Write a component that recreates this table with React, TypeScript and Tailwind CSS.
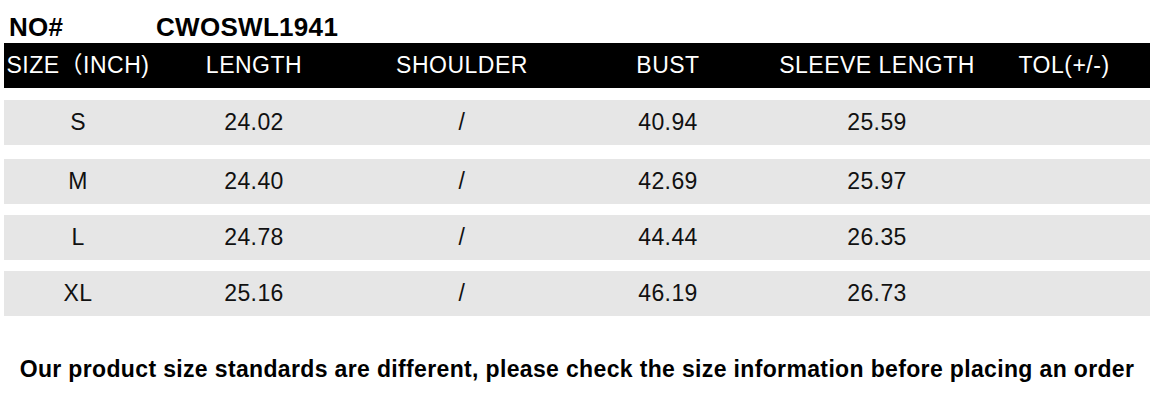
const cols = "grid grid-cols-[148px_204px_212px_200px_218px_164px]";

const headers = ["SIZE（INCH)", "LENGTH", "SHOULDER", "BUST", "SLEEVE LENGTH", "TOL(+/-)"];

const rows = [
  { size: "S", length: "24.02", shoulder: "/", bust: "40.94", sleeve: "25.59", mt: "mt-[12px]" },
  { size: "M", length: "24.40", shoulder: "/", bust: "42.69", sleeve: "25.97", mt: "mt-[14px]" },
  { size: "L", length: "24.78", shoulder: "/", bust: "44.44", sleeve: "26.35", mt: "mt-[11px]" },
  { size: "XL", length: "25.16", shoulder: "/", bust: "46.19", sleeve: "26.73", mt: "mt-[11px]" },
];

export default function App() {
  return (
    <div className="w-[1169px] h-[403px] bg-white text-black overflow-hidden font-['Liberation_Sans','Noto_Sans_CJK_SC',Arial,sans-serif]">
      <div className="h-[43px] pt-[14px] flex text-[26px] leading-[26px] font-bold tracking-[0.3px]">
        <span className="ml-[9px] w-[147px]">NO#</span>
        <span>CWOSWL1941</span>
      </div>

      <div className="ml-[4px] w-[1146px]">
        <div className={`${cols} h-[45px] bg-black text-white text-[23px] leading-[23px] tracking-[0.5px]`}>
          {headers.map((h, i) => (
            <div key={h} className={i === 5 ? "flex items-center justify-center pr-[8px]" : "flex items-center justify-center"}>
              {h}
            </div>
          ))}
        </div>

        {rows.map(r => (
          <div key={r.size} className={`${cols} ${r.mt} h-[45px] bg-[#e6e6e6] text-[23px] leading-[23px] tracking-[0.4px] text-[#111]`}>
            <div className="flex items-center justify-center">{r.size}</div>
            <div className="flex items-center justify-center">{r.length}</div>
            <div className="flex items-center justify-center">{r.shoulder}</div>
            <div className="flex items-center justify-center">{r.bust}</div>
            <div className="flex items-center justify-center">{r.sleeve}</div>
            <div />
          </div>
        ))}

        <p className="mt-[42px] text-center text-[23px] leading-[23px] font-bold tracking-[0.35px]">
          Our product size standards are different, please check the size information before placing an order
        </p>
      </div>
    </div>
  );
}
